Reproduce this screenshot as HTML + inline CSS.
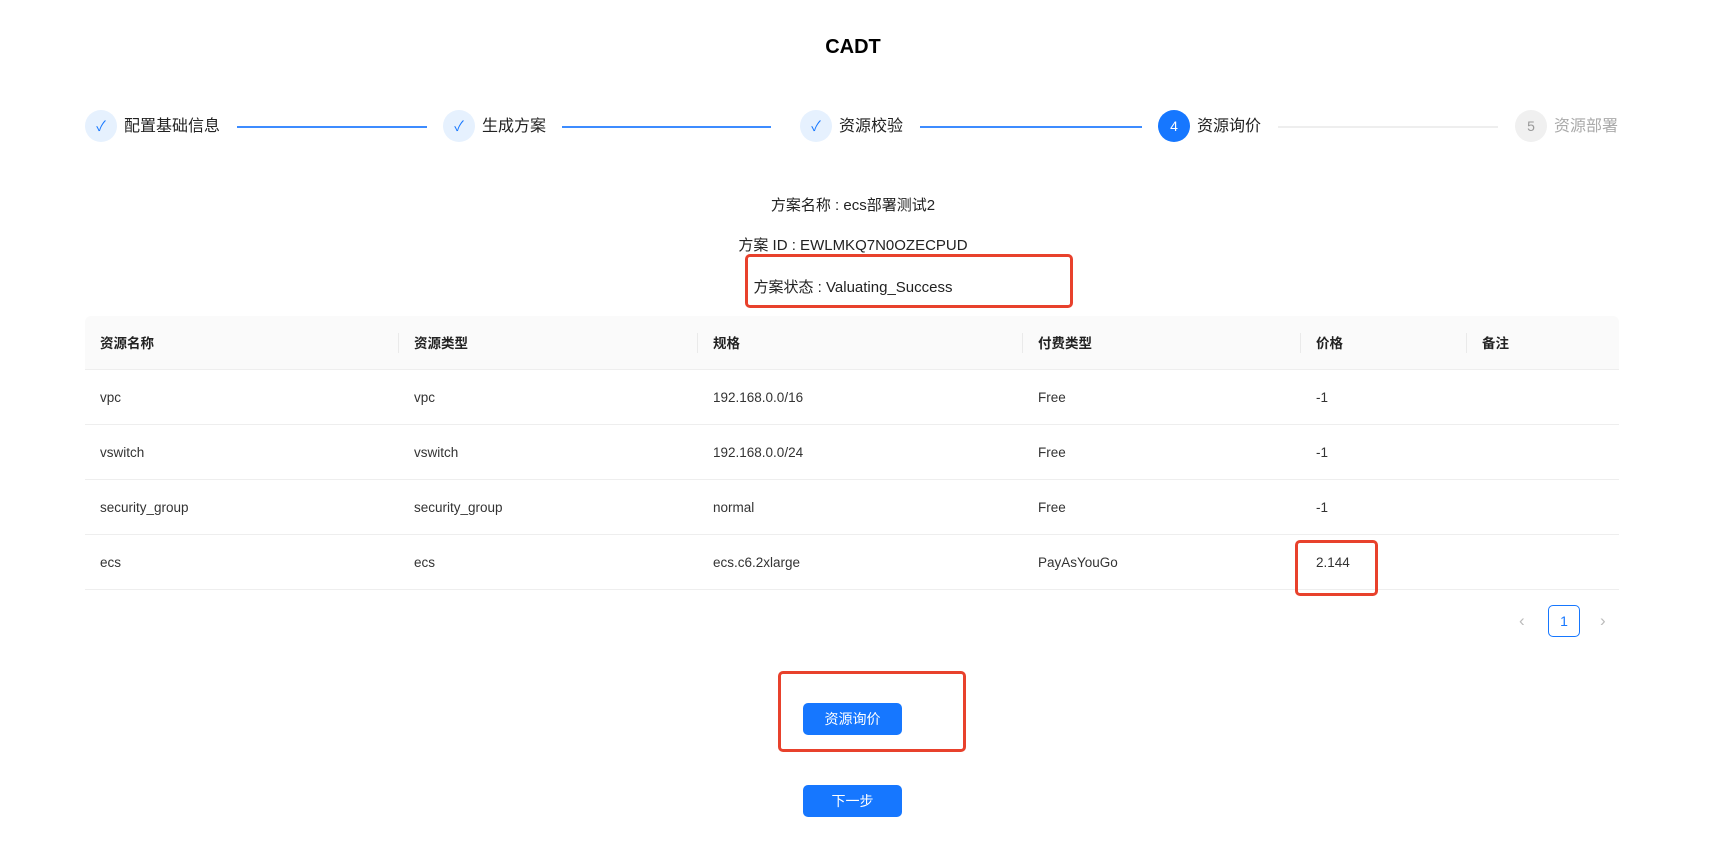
<!DOCTYPE html>
<html><head><meta charset="utf-8"><style>
*{margin:0;padding:0;box-sizing:border-box}
body{width:1726px;height:859px;background:#fff;position:relative;font-family:"Liberation Sans","Noto Sans CJK SC",sans-serif;color:#222;overflow:hidden}
.a{position:absolute}
.title{left:0;width:1706px;text-align:center;top:36px;font-size:20px;font-weight:bold;color:#000}
.c{width:32px;height:32px;border-radius:50%;top:110px;display:flex;align-items:center;justify-content:center;font-size:14px}
.done{background:#e6f1fe;color:#1677ff}
.lbl{top:116px;font-size:16px;line-height:22px;color:#222}
.ln{top:126px;height:1.5px;background:#3d8cff}
.info{left:0;width:1706px;text-align:center;font-size:15px;color:#222}
.red{border:3px solid #e8412c;border-radius:5px}
.row{left:85px;width:1534px;height:55px;border-bottom:1px solid #eee}
.cell{position:absolute;top:0;line-height:55px;font-size:13.5px;color:#333}
.hd .cell{font-weight:bold;color:#222}
.sep{position:absolute;top:17px;width:1px;height:20px;background:#eaeaea}
.btn{left:803px;width:99px;height:32px;background:#1677ff;color:#fff;border-radius:5px;font-size:14px;text-align:center;line-height:32px}
</style></head><body>
<div class="a title">CADT</div>

<div class="a c done" style="left:85px">✓</div><div class="a lbl" style="left:124px">配置基础信息</div>
<div class="a ln" style="left:237px;width:190px"></div>
<div class="a c done" style="left:443px">✓</div><div class="a lbl" style="left:482px">生成方案</div>
<div class="a ln" style="left:562px;width:209px"></div>
<div class="a c done" style="left:800px">✓</div><div class="a lbl" style="left:839px">资源校验</div>
<div class="a ln" style="left:920px;width:222px"></div>
<div class="a c" style="left:1158px;background:#1677ff;color:#fff">4</div><div class="a lbl" style="left:1197px">资源询价</div>
<div class="a ln" style="left:1278px;width:220px;background:#eee"></div>
<div class="a c" style="left:1515px;background:#f0f0f0;color:#999">5</div><div class="a lbl" style="left:1554px;color:#aaa">资源部署</div>

<div class="a info" style="top:194px">方案名称 : ecs部署测试2</div>
<div class="a info" style="top:234px">方案 ID : EWLMKQ7N0OZECPUD</div>
<div class="a info" style="top:276px">方案状态 : Valuating_Success</div>
<div class="a red" style="left:745px;top:254px;width:328px;height:54px"></div>

<div class="a row hd" style="top:316px;height:54px;background:#fafafa;border-radius:6px 6px 0 0">
<div class="cell" style="left:15px">资源名称</div><div class="sep" style="left:313px"></div>
<div class="cell" style="left:329px">资源类型</div><div class="sep" style="left:612px"></div>
<div class="cell" style="left:628px">规格</div><div class="sep" style="left:937px"></div>
<div class="cell" style="left:953px">付费类型</div><div class="sep" style="left:1215px"></div>
<div class="cell" style="left:1231px">价格</div><div class="sep" style="left:1381px"></div>
<div class="cell" style="left:1397px">备注</div></div>
<div class="a row" style="top:370px"><div class="cell" style="left:15px">vpc</div><div class="cell" style="left:329px">vpc</div><div class="cell" style="left:628px">192.168.0.0/16</div><div class="cell" style="left:953px">Free</div><div class="cell" style="left:1231px">-1</div></div>
<div class="a row" style="top:425px"><div class="cell" style="left:15px">vswitch</div><div class="cell" style="left:329px">vswitch</div><div class="cell" style="left:628px">192.168.0.0/24</div><div class="cell" style="left:953px">Free</div><div class="cell" style="left:1231px">-1</div></div>
<div class="a row" style="top:480px"><div class="cell" style="left:15px">security_group</div><div class="cell" style="left:329px">security_group</div><div class="cell" style="left:628px">normal</div><div class="cell" style="left:953px">Free</div><div class="cell" style="left:1231px">-1</div></div>
<div class="a row" style="top:535px"><div class="cell" style="left:15px">ecs</div><div class="cell" style="left:329px">ecs</div><div class="cell" style="left:628px">ecs.c6.2xlarge</div><div class="cell" style="left:953px">PayAsYouGo</div><div class="cell" style="left:1231px">2.144</div></div>
<div class="a red" style="left:1295px;top:540px;width:83px;height:56px"></div>

<div class="a" style="left:1519px;top:611px;color:#bbb;font-size:17px">‹</div>
<div class="a" style="left:1548px;top:605px;width:32px;height:32px;border:1px solid #1677ff;border-radius:5px;color:#1677ff;font-size:14px;text-align:center;line-height:30px">1</div>
<div class="a" style="left:1600px;top:611px;color:#bbb;font-size:17px">›</div>

<div class="a red" style="left:778px;top:671px;width:188px;height:81px"></div>
<div class="a btn" style="top:703px">资源询价</div>
<div class="a btn" style="top:785px">下一步</div>
</body></html>
